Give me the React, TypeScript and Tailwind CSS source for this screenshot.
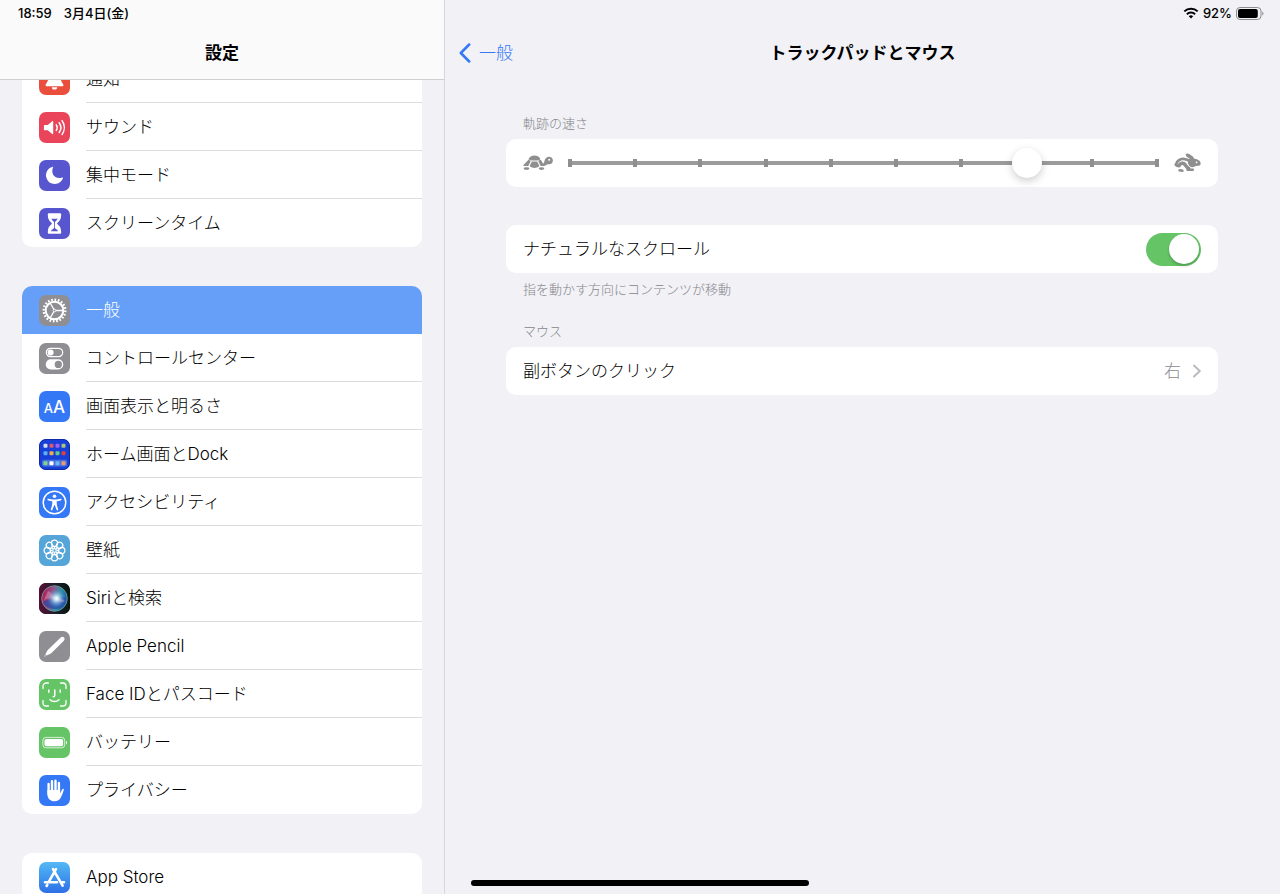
import type { ReactNode } from "react";
import clsx from "clsx";

interface Item {
  label: string;
  tile: string;
  icon: ReactNode;
  active?: boolean;
}

const BellIcon = () => (
  <svg viewBox="0 0 31 31" fill="#fff">
    <path d="M15.500 5.500c-4 0-6 3-6 6.500 0 4.500-1.500 6.500-2.500 8-.8 1.200-.4 2.300 1 2.300h15c1.400 0 1.800-1.100 1-2.300-1-1.500-2.500-3.500-2.500-8 0-3.500-2-6.500-6-6.500z" />
    <path d="M12.800 23.300h5.400a2.700 2.300 0 0 1-5.400 0z" />
  </svg>
);

const SoundIcon = () => (
  <svg viewBox="0 0 31 31" fill="none" stroke="#fff" strokeWidth="1.500" strokeLinecap="round">
    <path d="M5.800 13h3l4.400-3.800c.6-.5 1-.3 1 .4v12c0 .7-.4.900-1 .4L8.800 18.300h-3c-.6 0-.9-.3-.9-.9v-3.500c0-.6.3-.9.900-.9z" fill="#fff" stroke="none" />
    <path d="M17.300 12.800a5 5 0 0 1 0 5.600M20.200 10.700a8.500 8.500 0 0 1 0 9.800M23.100 8.700a12 12 0 0 1 0 13.800" />
  </svg>
);

const MoonIcon = () => (
  <svg viewBox="0 0 31 31" fill="#fff">
    <path d="M13.300 6.900c.6-.2 1 .1.700.7-2.600 6.400 2.200 12.300 9.100 10 .6-.2 1 .1.700.8A8.700 8.700 0 1 1 13.300 6.900z" />
  </svg>
);

const HourglassIcon = () => (
  <svg viewBox="0 0 31 31">
    <path d="M10.300 5.300h10.400c.9 0 1.500.5 1.500 1.300 0 4.400-1.400 6.400-3.600 8.200-.6.500-.6 1 0 1.500 2.200 1.800 3.600 3.800 3.600 8.100 0 .8-.6 1.300-1.500 1.300H10.300c-.9 0-1.500-.5-1.500-1.300 0-4.300 1.400-6.300 3.600-8.100.6-.5.6-1 0-1.500-2.200-1.800-3.600-3.800-3.600-8.200 0-.8.6-1.300 1.500-1.300z" fill="#fff" />
    <path d="M12.300 10.800h6.400c-.7 1.300-1.400 1.900-2.300 2.700-.4.400-.5 1-.5 2v4.500c.3.800 2.600 1.500 3.200 3.200h-7.200c.6-1.700 2.900-2.400 3.200-3.200v-4.500c0-1-.1-1.600-.5-2-.9-.8-1.600-1.400-2.300-2.700z" fill="#5756ce" />
  </svg>
);

const GearIcon = () => (
  <svg viewBox="0 0 31 31" fill="none" stroke="#fff">
    <circle cx="15.500" cy="15.500" r="10.800" strokeWidth="2.400" pathLength="40" strokeDasharray="1 1" />
    <circle cx="15.500" cy="15.500" r="8.800" strokeWidth="2" />
    <path d="M15.500 15.500h9M15.500 15.500 11 7.700M15.500 15.500 11 23.300" strokeWidth="1.300" />
    <circle cx="15.500" cy="15.500" r="1.300" fill="#8e8e93" strokeWidth="1" />
  </svg>
);

const SwitchesIcon = () => (
  <svg viewBox="0 0 31 31">
    <rect x="7.300" y="5.300" width="16.400" height="8.400" rx="4.200" fill="none" stroke="#fff" strokeWidth="1.200" />
    <circle cx="11.600" cy="9.500" r="3" fill="#fff" />
    <rect x="6.700" y="16.300" width="17.600" height="10.200" rx="5.100" fill="#fff" />
    <circle cx="19.300" cy="21.400" r="3.600" fill="#8e8e93" />
  </svg>
);

const TextSizeIcon = () => (
  <span className="flex h-full items-baseline justify-center font-medium text-white">
    <span className="text-[13px] leading-8">A</span>
    <span className="text-[17px] leading-8">A</span>
  </span>
);

const homeDots = [
  ["#d5ddea", "#e0566b", "#a45ff0", "#a9c77a"],
  ["#5cb0f2", "#efa94f", "#62c98f", "#d8433c"],
  ["#7fd48d", "#ffffff", "#6db8f5", "#ee9a6b"],
];

const HomeScreenIcon = () => (
  <svg viewBox="0 0 31 31">
    <rect x=".5" y=".5" width="30" height="30" rx="6.500" fill="#1840d8" stroke="#1029a4" />
    <rect x="3" y="20.800" width="25" height="6.700" rx="2" fill="#4a72df" />
    {homeDots.map((row, y) =>
      row.map((color, x) => (
        <rect key={`${x}-${y}`} x={4.500 + x * 6} y={[4.700, 12.200, 22.200][y]} width="4" height="4" rx="1" fill={color} />
      ))
    )}
  </svg>
);

const AccessibilityIcon = () => (
  <svg viewBox="0 0 31 31" fill="#fff">
    <circle cx="15.500" cy="15.500" r="11.300" fill="none" stroke="#fff" strokeWidth="1.500" />
    <circle cx="15.500" cy="9.300" r="1.800" />
    <path d="M9.300 11.800c1.800.5 3.300.8 6.200.8s4.400-.3 6.200-.8c1-.2 1.200 1.100.4 1.400-1.600.6-2.900.9-4.300 1.100-.3 2.600.2 4.500 1.400 8 .3 1.100-1.100 1.600-1.500.6l-2-5h-.4l-2 5c-.4 1-1.800.5-1.500-.6 1.200-3.500 1.700-5.400 1.400-8-1.400-.2-2.700-.5-4.300-1.100-.8-.3-.6-1.600.4-1.400z" />
  </svg>
);

const WallpaperIcon = () => (
  <svg viewBox="0 0 31 31" fill="none" stroke="#fff" strokeWidth="1.200">
    {[0, 45, 90, 135, 180, 225, 270, 315].map(a => (
      <g key={a} transform={`rotate(${a} 15.5 15.5)`}>
        <circle cx="15.500" cy="8.200" r="3.100" />
        <path d="M15.500 11.300v2" />
      </g>
    ))}
    <circle cx="15.500" cy="15.500" r="4" />
    <circle cx="15.500" cy="15.500" r="1.800" />
  </svg>
);

const SiriIcon = () => (
  <svg viewBox="0 0 31 31">
    <defs>
      <radialGradient id="siri-core" cx=".54" cy=".5" r=".4">
        <stop offset="0" stopColor="#fff" />
        <stop offset=".25" stopColor="#d9f4ff" stopOpacity=".85" />
        <stop offset="1" stopColor="#4a8fd8" stopOpacity="0" />
      </radialGradient>
      <linearGradient id="siri-orb" x1="0" y1=".3" x2="1" y2=".6">
        <stop offset="0" stopColor="#b3174f" />
        <stop offset=".4" stopColor="#8b5a8e" />
        <stop offset=".65" stopColor="#2f93a5" />
        <stop offset="1" stopColor="#1c4fa8" />
      </linearGradient>
      <linearGradient id="siri-back">
        <stop offset="0" stopColor="#5a0f35" />
        <stop offset=".5" stopColor="#1e1d2e" />
        <stop offset="1" stopColor="#07170f" />
      </linearGradient>
    </defs>
    <rect width="31" height="31" rx="7" fill="url(#siri-back)" />
    <circle cx="15.500" cy="15.500" r="12.800" fill="url(#siri-orb)" stroke="#6fa49e" strokeWidth=".8" />
    <path d="M4 19c5-3 8-2 11-3s7-4 12-1c-1 7-5 11-11 11S5 23 4 19z" fill="#2547a5" opacity=".7" />
    <path d="M9 8c3 1 5 4 7 8-4-1-8-1-11 1M17 16c3-1 6 0 9 2-3 2-7 1-9-2" fill="#e78fb1" opacity=".5" />
    <circle cx="16.500" cy="15.500" r="12" fill="url(#siri-core)" />
  </svg>
);

const PencilIcon = () => (
  <svg viewBox="0 0 31 31" fill="#fff">
    <path d="M21.400 6.700c1.300-1.200 2.700-1.200 3.600-.2.900.9.800 2.200-.4 3.500L12 22.500l-4.500 2.100-1.200-1.300L8.600 19.300z" />
    <path d="M5.900 24l1 1-1.700.7z" />
  </svg>
);

const FaceIcon = () => (
  <svg viewBox="0 0 31 31" fill="none" stroke="#fff" strokeWidth="1.500" strokeLinecap="round">
    <path d="M4 9.500V7.300A3.300 3.300 0 0 1 7.300 4h2.200M21.500 4h2.200A3.300 3.300 0 0 1 27 7.300v2.200M27 21.500v2.200a3.300 3.300 0 0 1-3.300 3.300h-2.200M9.500 27H7.300A3.300 3.300 0 0 1 4 23.700v-2.200" strokeWidth="1.300" />
    <path d="M9.800 11v2.200M21.200 11v2.200M15.800 11v5.300c0 1-.6 1.500-1.600 1.500M11 20.700c2.500 2.400 6.500 2.400 9 0" />
  </svg>
);

const BatteryTileIcon = () => (
  <svg viewBox="0 0 31 31" fill="#fff">
    <rect x="3.900" y="10.400" width="21.800" height="10.400" rx="3" fill="none" stroke="#fff" strokeOpacity=".75" />
    <rect x="5.500" y="12" width="18.600" height="7.200" rx="1.800" />
    <path d="M27 13.800c1.300.5 1.300 3.100 0 3.600z" />
  </svg>
);

const HandIcon = () => (
  <svg viewBox="0 0 31 31" fill="#fff" stroke="#fff" strokeLinecap="round">
    <path d="M9.600 9v10M13 6.300V17M16.500 5.700V17M19.900 8v11" strokeWidth="2.400" />
    <path d="M8.400 15h12.700v3.500c.8-1.500 1.500-3 2.100-4.300.4-.9 2-.7 1.600.6-.9 3-1.700 5.500-3 7.800-1.300 2.500-3.200 3.700-6.200 3.700-4.700 0-7.200-3-7.200-7.300z" stroke="none" />
  </svg>
);

const AppStoreIcon = () => (
  <svg viewBox="0 0 31 31" fill="none" stroke="#fff" strokeWidth="2.600" strokeLinecap="round">
    <path d="M17 7.200 10 19.300M14 7.200l9.600 16.500M6 20.300h12M22.300 20.300h2.700M8.300 22.800l-.7 1.200" />
  </svg>
);

const groups: { id: string; items: Item[] }[] = [
  {
    id: "alerts",
    items: [
      { label: "通知", tile: "bg-[#ea4e3d]", icon: <BellIcon /> },
      { label: "サウンド", tile: "bg-[#ea445a]", icon: <SoundIcon /> },
      { label: "集中モード", tile: "bg-[#5756ce]", icon: <MoonIcon /> },
      { label: "スクリーンタイム", tile: "bg-[#5756ce]", icon: <HourglassIcon /> },
    ],
  },
  {
    id: "system",
    items: [
      { label: "一般", tile: "bg-[#8e8e93]", icon: <GearIcon />, active: true },
      { label: "コントロールセンター", tile: "bg-[#8e8e93]", icon: <SwitchesIcon /> },
      { label: "画面表示と明るさ", tile: "bg-[#3478f6]", icon: <TextSizeIcon /> },
      { label: "ホーム画面とDock", tile: "bg-[#1840d8]", icon: <HomeScreenIcon /> },
      { label: "アクセシビリティ", tile: "bg-[#3478f6]", icon: <AccessibilityIcon /> },
      { label: "壁紙", tile: "bg-[#55a5d9]", icon: <WallpaperIcon /> },
      { label: "Siriと検索", tile: "bg-black", icon: <SiriIcon /> },
      { label: "Apple Pencil", tile: "bg-[#8e8e93]", icon: <PencilIcon /> },
      { label: "Face IDとパスコード", tile: "bg-[#65c466]", icon: <FaceIcon /> },
      { label: "バッテリー", tile: "bg-[#65c466]", icon: <BatteryTileIcon /> },
      { label: "プライバシー", tile: "bg-[#3478f6]", icon: <HandIcon /> },
    ],
  },
  {
    id: "store",
    items: [
      { label: "App Store", tile: "bg-linear-to-b from-[#55b9f4] to-[#2f6fe6]", icon: <AppStoreIcon /> },
    ],
  },
];

function SidebarRow({ item, last }: { item: Item; last: boolean }) {
  return (
    <li>
      <a
        href="#"
        aria-current={item.active ? "page" : undefined}
        className={clsx("flex h-12 items-center gap-4 pl-[17px]", item.active && "bg-[#659ff8] text-white")}
      >
        <span className={clsx("size-[31px] shrink-0 overflow-hidden rounded-[7px]", item.tile)}>{item.icon}</span>
        <span className={clsx("flex h-full flex-1 items-center border-b", last || item.active ? "border-transparent" : "border-[#dcdcde]")}>
          {item.label}
        </span>
      </a>
    </li>
  );
}

function Sidebar() {
  return (
    <aside className="flex w-[445px] shrink-0 flex-col border-r border-[#d8d8dc]">
      <header className="shrink-0 border-b border-[#cfcfd2] bg-[#fafafb]">
        <p className="flex h-[26px] items-center gap-3 pl-[18px] text-[13px] font-medium">
          <span>18:59</span>
          <span>3月4日(金)</span>
        </p>
        <h1 className="flex h-[53px] items-center justify-center font-semibold">設定</h1>
      </header>
      <nav className="min-h-0 flex-1 overflow-hidden px-[22px]">
        {/* list is scrolled part of the way under the header */}
        <div className="-mt-[25px] flex flex-col gap-[39px]">
          {groups.map(g => (
            <ul key={g.id} className="overflow-hidden rounded-[10px] bg-white">
              {g.items.map((item, i) => (
                <SidebarRow key={item.label} item={item} last={i === g.items.length - 1} />
              ))}
            </ul>
          ))}
        </div>
      </nav>
    </aside>
  );
}

const Tortoise = () => (
  <svg viewBox="0 0 30 16" className="h-4 w-[30px] shrink-0" fill="#8f8f8f">
    <path d="M5.800 3.600C7 1.600 9 .4 11.500.4s4.500 1.200 5.700 3.200c.3.500.1.900-.4 1.100l-2.300.9H8.500l-2.300-.9c-.5-.2-.7-.6-.4-1.100z" />
    <path d="M5 5.200c.2-.4.600-.5 1-.3l1.300.6c.4.200.5.500.3.900l-2.100 4c-.2.400-.5.600-1 .6H1.100c-.7 0-.9-.5-.6-1z" />
    <path d="M8.900 6.600h5.200l2 3.700c.3.600.1 1.100-.5 1.500-1.100.7-2.400 1.200-4.100 1.200s-3-.5-4.100-1.200c-.6-.4-.8-.9-.5-1.500z" />
    <path d="M15.600 5.600l1.400-.6c.5-.2.900-.1 1.100.3l2 3.500c.7-.6 1-1.600 1.300-2.600.7-2.900 2.300-4.500 4.600-4.500s3.900 1.600 3.900 3.700-1.500 3.700-3.700 3.800c-1.500.1-2.300.2-3.200 1-.7.600-1.400.8-2.300.8h-2.300c-.5 0-.8-.2-1-.6l-2-4c-.2-.4-.1-.6.200-.8z" />
    <circle cx="26.200" cy="4.800" r="1" fill="#fff" />
    <ellipse cx="3.500" cy="13.600" rx="2.900" ry="1.400" />
    <ellipse cx="18.500" cy="13.600" rx="2.800" ry="1.400" />
  </svg>
);

const Hare = () => (
  <svg viewBox="0 0 27 20" className="h-5 w-[27px] shrink-0" fill="none" stroke="#8f8f8f" strokeLinecap="round" strokeLinejoin="round">
    <ellipse cx="15.800" cy="3.700" rx="4.600" ry="1.900" transform="rotate(32 15.800 3.700)" fill="#8f8f8f" stroke="none" />
    <path d="M17.500 5c2.300.3 4.300 1 5.800 1.400 2 .6 3.400 2.200 3.400 4 0 1.500-1.100 2.400-3 2.400-2.400.1-3.700 1.400-5.700 1.400-2.200 0-3-2-4-3.600L14 6.500z" fill="#8f8f8f" stroke="none" />
    <path d="M2 11.500C3.300 7.500 6.300 5.800 9.500 5.900c3.200.1 5 1.200 7.500 3.300" strokeWidth="2.800" />
    <path d="M5 12.600c1.300-2.300 3.600-3 5.200-1.700 1.500 1.300 2 3.200 4.600 4.600" strokeWidth="3.600" />
    <path d="M13.500 16.800h5.300" strokeWidth="2.400" />
    <path d="M1.800 11.800l1.200 1" strokeWidth="2.600" />
    <path d="M5.500 17.200l3 .5" strokeWidth="2.400" />
    <circle cx="22.600" cy="9.300" r=".9" fill="#fff" stroke="none" />
  </svg>
);

function SpeedSlider() {
  return (
    <div className="flex h-12 items-center gap-0.5 rounded-[10px] bg-white px-[17px]">
      <Tortoise />
      <div className="grid min-w-0 flex-1 items-center">
        <div className="col-start-1 row-start-1 mx-[13px] h-1 bg-[#9b9b9b]" />
        <div className="col-start-1 row-start-1 mx-[13px] flex justify-between">
          {Array.from({ length: 10 }, (_, i) => (
            <span key={i} className="h-2 w-1 bg-[#8f8f8f]" />
          ))}
        </div>
        <input
          type="range"
          min={0}
          max={9}
          defaultValue={7}
          aria-labelledby="speed-title"
          className="col-start-1 row-start-1 h-[30px] w-full appearance-none bg-transparent [&::-webkit-slider-thumb]:size-[30px] [&::-webkit-slider-thumb]:appearance-none [&::-webkit-slider-thumb]:rounded-full [&::-webkit-slider-thumb]:bg-white [&::-webkit-slider-thumb]:shadow-[0_3px_8px_rgba(0,0,0,0.2)]"
        />
      </div>
      <Hare />
    </div>
  );
}

function StatusIcons() {
  return (
    <div className="flex h-[26px] items-center justify-end gap-1 pr-4 text-[13px] font-medium">
      <svg viewBox="0 0 16 12" className="h-3 w-4" fill="none" stroke="#000" strokeWidth="2">
        <path d="M1.300 4.400a9.600 9.600 0 0 1 13.400 0M3.900 7.200a5.900 5.900 0 0 1 8.200 0" />
        <path d="M8 11.500 5.800 9.200a3.200 3.200 0 0 1 4.400 0z" fill="#000" stroke="none" />
      </svg>
      <span>92%</span>
      <svg viewBox="0 0 28 13" className="h-[13px] w-7">
        <rect x=".5" y=".5" width="24.500" height="12" rx="3.500" fill="none" stroke="#8c8c8f" />
        <rect x="2" y="2" width="19.800" height="9" rx="2" />
        <path d="M26.300 4.500c1.600.6 1.600 3.400 0 4z" fill="#8c8c8f" />
      </svg>
    </div>
  );
}

export default function App() {
  return (
    <div
      lang="ja"
      className="relative flex h-screen overflow-hidden bg-[#f1f1f6] font-[Inter,'Noto_Sans_CJK_JP',sans-serif] text-[17px] leading-6 font-light text-black"
    >
      <Sidebar />
      <main className="min-w-0 flex-1">
        <header>
          <StatusIcons />
          <div className="grid h-[53px] grid-cols-[1fr_auto_1fr] items-center">
            <a href="#" className="flex items-center gap-2 pl-3.5 text-[#3478f6]">
              <svg viewBox="0 0 12 20" className="h-5 w-3" fill="none" stroke="currentColor" strokeWidth="2.500" strokeLinecap="round" strokeLinejoin="round">
                <path d="M10.200 1.500 1.800 10l8.400 8.500" />
              </svg>
              一般
            </a>
            <h2 className="font-semibold">トラックパッドとマウス</h2>
          </div>
        </header>

        <div className="pt-9 pr-[62px] pl-[61px]">
          <section>
            <h3 id="speed-title" className="mb-2 pl-[17px] text-[13px] leading-4 text-[#86868b]">軌跡の速さ</h3>
            <SpeedSlider />
          </section>

          <section className="mt-[38px]">
            <label className="flex h-12 items-center justify-between rounded-[10px] bg-white px-[17px]">
              ナチュラルなスクロール
              <input
                type="checkbox"
                role="switch"
                defaultChecked
                className="flex h-[33px] w-[55px] appearance-none items-center rounded-full bg-[#d9d9dc] px-0.5 before:size-[30px] before:rounded-full before:bg-white before:shadow-[0_2px_3px_rgba(0,0,0,0.2)] checked:justify-end checked:bg-[#65c466]"
              />
            </label>
            <p className="mt-2 pl-[17px] text-[13px] leading-4 text-[#86868b]">指を動かす方向にコンテンツが移動</p>
          </section>

          <section className="mt-[26px]">
            <h3 className="mb-2 pl-[17px] text-[13px] leading-4 text-[#86868b]">マウス</h3>
            <a href="#" className="flex h-12 items-center rounded-[10px] bg-white px-[17px]">
              <span className="flex-1">副ボタンのクリック</span>
              <span className="text-[#8a8a8e]">右</span>
              <svg viewBox="0 0 8 14" className="ml-3 h-3.5 w-2" fill="none" stroke="#bcbcc0" strokeWidth="2" strokeLinecap="round" strokeLinejoin="round">
                <path d="m1 1.500 5.800 5.500L1 12.500" />
              </svg>
            </a>
          </section>
        </div>
      </main>
      <div className="absolute bottom-2 left-1/2 h-1.5 w-[338px] -translate-x-1/2 rounded-full bg-black" />
    </div>
  );
}
